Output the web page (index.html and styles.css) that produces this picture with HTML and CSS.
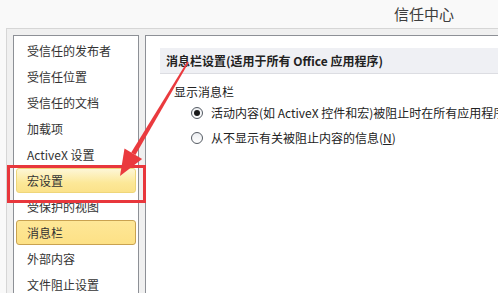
FILE: index.html
```html
<!DOCTYPE html>
<html lang="zh-CN">
<head>
    <meta charset="UTF-8">
    <meta name="viewport" content="width=device-width, initial-scale=1.0">
    <title>信任中心</title>
    <link rel="stylesheet" href="styles.css">
</head>
<body>
    <div class="dialog">
        <div class="title-bar">
            <span class="title">信任中心</span>
        </div>

        <div class="dialog-body">
            <ul class="nav">
                <li class="nav-item">受信任的发布者</li>
                <li class="nav-item">受信任位置</li>
                <li class="nav-item">受信任的文档</li>
                <li class="nav-item">加载项</li>
                <li class="nav-item">ActiveX 设置</li>
                <li class="nav-item hover">宏设置</li>
                <li class="nav-item">受保护的视图</li>
                <li class="nav-item active">消息栏</li>
                <li class="nav-item">外部内容</li>
                <li class="nav-item">文件阻止设置</li>
            </ul>

            <div class="panel">
                <div class="section-head">消息栏设置(适用于所有 Office 应用程序)</div>
                <div class="group-label">显示消息栏</div>
                <div class="option">
                    <span class="radio checked"></span>
                    <span class="option-text">活动内容(如 ActiveX 控件和宏)被阻止时在所有应用程序中显示消息栏(<u>S</u>)</span>
                </div>
                <div class="option">
                    <span class="radio"></span>
                    <span class="option-text">从不显示有关被阻止内容的信息(<u>N</u>)</span>
                </div>
            </div>
        </div>

        <!-- red annotation drawn over the dialog -->
        <svg class="annotation" width="498" height="293" viewBox="0 0 498 293">
            <rect x="8.5" y="166.5" width="136" height="35" fill="none" stroke="#e8373c" stroke-width="3"/>
            <polygon points="188.7,62.5 187.3,61.5 131.2,152.4 135.4,155" fill="#ea3a3e"/>
            <polygon points="120,176 124.5,148.4 142.1,159" fill="#ea3a3e"/>
        </svg>
    </div>
</body>
</html>
```

FILE: styles.css
```css
* {
    margin: 0;
    padding: 0;
    box-sizing: border-box;
}

html,
body {
    width: 498px;
    height: 293px;
    overflow: hidden;
}

body {
    font-family: "Noto Sans CJK SC", "Noto Sans", sans-serif;
    font-size: 12px;
    color: #2b2b2b;
    background: #f9f9f9;
}

.dialog {
    position: relative;
    height: 293px;
}

.title-bar {
    height: 28px;
    display: flex;
    align-items: center;
    justify-content: flex-end;
    padding-right: 44px;
}

.title {
    font-size: 15px;
    line-height: 18px;
    color: #3d3d3d;
}

.dialog-body {
    display: flex;
    gap: 6px;
    height: 265px;
    margin-left: 6px;
    padding: 6px 0 0 6px;
    background: #f0f0f0;
    border-top: 1px solid #d6d6d6;
    border-left: 1px solid #d6d6d6;
    overflow: hidden;
}

/* left list */
.nav {
    list-style: none;
    flex: none;
    width: 126px;
    padding-top: 1px;
    background: #fff;
    border: 1px solid #8d9096;
    border-bottom: 0;
}

.nav-item {
    height: 25px;
    margin: 1px 2px;
    padding-left: 10px;
    line-height: 23px;
    color: #333;
    border: 1px solid transparent;
    border-radius: 3px;
    white-space: nowrap;
}

.nav-item.hover {
    background: linear-gradient(#fdf6d6, #fce898 60%, #fbe28a);
    border-color: #efd67a;
}

.nav-item.active {
    background: linear-gradient(#fee797, #fde186);
    border-color: #c9a250;
}

/* right panel */
.panel {
    flex: 1;
    min-width: 0;
    margin-right: -20px;
    padding: 12px 0 0 14px;
    background: #fff;
    border: 1px solid #8d9096;
    border-bottom: 0;
    overflow: hidden;
}

.section-head {
    height: 26px;
    padding-left: 6px;
    line-height: 25px;
    font-weight: bold;
    color: #222;
    background: #eff0f4;
    border-bottom: 1px solid #dcdde2;
    white-space: nowrap;
}

.group-label {
    margin: 10px 0 0 14px;
    line-height: 16px;
    color: #222;
}

.option {
    display: flex;
    align-items: center;
    height: 25px;
    margin-left: 31px;
    color: #222;
}

.option-text {
    white-space: nowrap;
    overflow: hidden;
}

.radio {
    flex: none;
    width: 12px;
    height: 12px;
    margin-right: 8px;
    border: 1px solid #555b63;
    border-radius: 50%;
    background: linear-gradient(#eceef1, #fff);
    display: flex;
    align-items: center;
    justify-content: center;
}

.radio.checked::after {
    content: "";
    width: 6px;
    height: 6px;
    border-radius: 50%;
    background: #1a1a1a;
}

.annotation {
    position: absolute;
    top: 0;
    left: 0;
    pointer-events: none;
}
```
